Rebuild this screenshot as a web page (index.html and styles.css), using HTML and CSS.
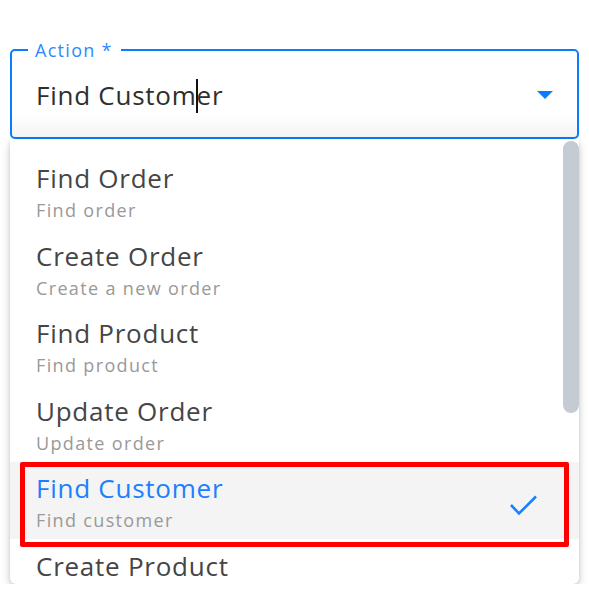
FILE: index.html
```html
<!DOCTYPE html>
<html lang="en">
<head>
    <meta charset="UTF-8">
    <meta name="viewport" content="width=device-width, initial-scale=1.0">
    <title>Action select</title>
    <link rel="stylesheet" href="styles.css">
</head>
<body>

    <div class="select">
        <fieldset class="field">
            <legend>Action *</legend>
            <div class="value">Find Custom<span class="caret"></span>er</div>
            <span class="arrow"></span>
        </fieldset>

        <div class="menu">
            <ul class="options">
                <li class="option">
                    <div>
                        <div class="title">Find Order</div>
                        <div class="sub">Find order</div>
                    </div>
                </li>
                <li class="option">
                    <div>
                        <div class="title">Create Order</div>
                        <div class="sub">Create a new order</div>
                    </div>
                </li>
                <li class="option">
                    <div>
                        <div class="title">Find Product</div>
                        <div class="sub">Find product</div>
                    </div>
                </li>
                <li class="option">
                    <div>
                        <div class="title">Update Order</div>
                        <div class="sub">Update order</div>
                    </div>
                </li>
                <li class="option selected">
                    <div>
                        <div class="title">Find Customer</div>
                        <div class="sub">Find customer</div>
                    </div>
                    <svg class="check" width="30" height="24" viewBox="0 0 30 24">
                        <polyline points="2,11 10,19.5 27,2.5" fill="none" stroke="#1a80ff" stroke-width="2.6"/>
                    </svg>
                </li>
                <li class="option">
                    <div>
                        <div class="title">Create Product</div>
                        <div class="sub">Create a new product</div>
                    </div>
                </li>
            </ul>
            <div class="thumb"></div>
            <div class="highlight"></div>
        </div>
    </div>

</body>
</html>
```

FILE: styles.css
```css
body {
    font-family: "Open Sans", "Noto Sans", sans-serif;
    background: #ffffff;
    color: #333;
    margin: 0;
}
.select {
    width: 569px;
    margin: 40px 10px 0 10px;
}
.field {
    display: flex;
    align-items: center;
    justify-content: space-between;
    margin: 0;
    padding: 17px 24px 24px 24px;
    border: 2px solid #0a7cff;
    border-radius: 5px;
    background: linear-gradient(to bottom, #ffffff 72%, #f4f4f4);
    min-width: 0;
}
.field legend {
    margin-left: -8px;
    padding: 0 8px 0 7px;
    font-size: 18px;
    line-height: 20px;
    letter-spacing: 1.3px;
    color: #2b8aff;
}
.value {
    font-size: 26px;
    line-height: 36px;
    letter-spacing: 0.75px;
    color: #2e2e2e;
}
.caret {
    display: inline-block;
    width: 2px;
    height: 34px;
    margin: 0 -1px;
    background: #111;
    vertical-align: -8px;
}
.arrow {
    width: 0;
    height: 0;
    border-left: 8px solid transparent;
    border-right: 8px solid transparent;
    border-top: 8px solid #0a7cff;
    margin-top: 0;
}
.menu {
    position: relative;
    height: 445px;
    overflow: hidden;
    background: #fff;
    border-radius: 0 0 6px 6px;
    box-shadow: 0 5px 10px rgba(0, 0, 0, 0.18), 0 1px 4px rgba(0, 0, 0, 0.1);
}
.options {
    list-style: none;
    margin: 0;
    padding: 12.5px 0 0 0;
}
.option {
    display: flex;
    justify-content: space-between;
    height: 77.5px;
    padding: 7.5px 40px 0 26px;
    box-sizing: border-box;
}
.option .title {
    font-size: 26px;
    line-height: 38px;
    letter-spacing: 0.75px;
    color: #454545;
}
.option .sub {
    font-size: 18px;
    line-height: 26px;
    letter-spacing: 1.35px;
    color: #999;
}
.option.selected {
    background: #f4f4f4;
}
.option.selected .title {
    color: #1a80ff;
}
.check {
    margin-top: 25px;
}
.thumb {
    position: absolute;
    top: 2px;
    right: 0;
    width: 16px;
    height: 272px;
    border-radius: 8px;
    background: #c5cbd3;
}
.highlight {
    position: absolute;
    left: 10px;
    top: 323px;
    width: 549px;
    height: 85px;
    box-sizing: border-box;
    border: 5px solid #ff0000;
    border-radius: 2px;
}
```
